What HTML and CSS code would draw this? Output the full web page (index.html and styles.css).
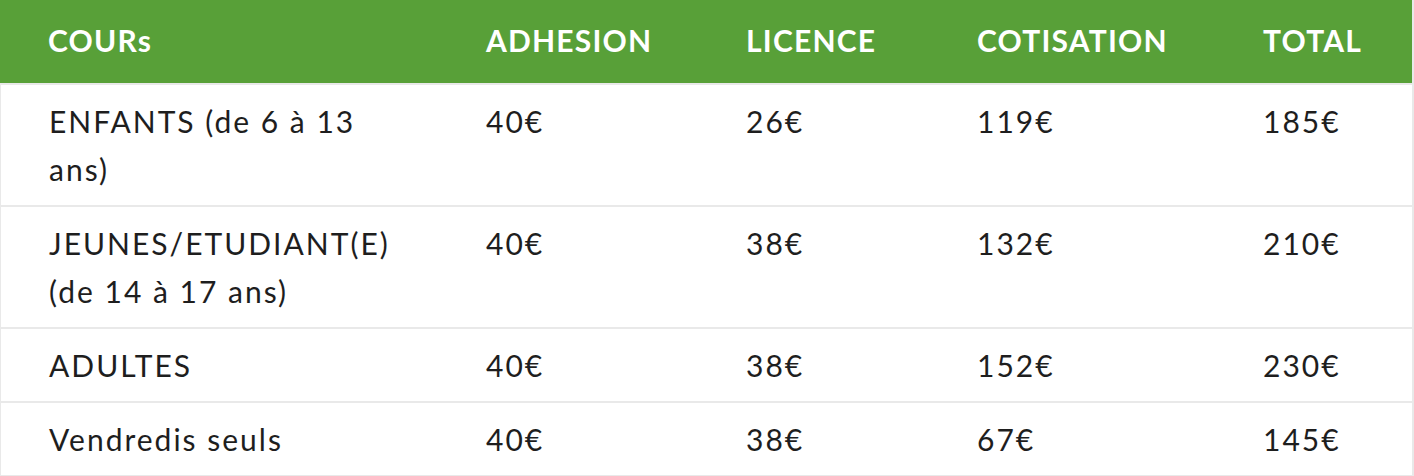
FILE: index.html
```html
<!DOCTYPE html>
<html lang="fr">
<head>
<meta charset="utf-8">
<title>Tarifs</title>
<link rel="stylesheet" href="styles.css">
</head>
<body>
<table class="tarifs">
  <colgroup>
    <col class="c1"><col class="c2"><col class="c3"><col class="c4"><col class="c5">
  </colgroup>
  <thead>
    <tr>
      <th>COURs</th>
      <th>ADHESION</th>
      <th>LICENCE</th>
      <th>COTISATION</th>
      <th>TOTAL</th>
    </tr>
  </thead>
  <tbody>
    <tr>
      <td>ENFANTS (de 6 à 13 ans)</td>
      <td>40€</td>
      <td>26€</td>
      <td>119€</td>
      <td>185€</td>
    </tr>
    <tr>
      <td>JEUNES/ETUDIANT(E) (de 14 à 17 ans)</td>
      <td>40€</td>
      <td>38€</td>
      <td>132€</td>
      <td>210€</td>
    </tr>
    <tr>
      <td>ADULTES</td>
      <td>40€</td>
      <td>38€</td>
      <td>152€</td>
      <td>230€</td>
    </tr>
    <tr>
      <td>Vendredis seuls</td>
      <td>40€</td>
      <td>38€</td>
      <td>67€</td>
      <td>145€</td>
    </tr>
  </tbody>
</table>
</body>
</html>
```
FILE: styles.css
```css
html, body {
  margin: 0;
  padding: 0;
  background: #ffffff;
}

.tarifs {
  width: 1414px;
  table-layout: fixed;
  border-collapse: separate;
  border-spacing: 0;
  border-right: 2px solid #e9e9e9;
  font-family: Lato, "Open Sans", sans-serif;
  font-size: 30px;
  line-height: 48px;
  color: #1e1e1e;
}

.c1 { width: 438px; }
.c2 { width: 260px; }
.c3 { width: 231px; }
.c4 { width: 286px; }
.c5 { width: 197px; }

.tarifs th {
  background: #58a038;
  color: #ffffff;
  font-weight: 700;
  letter-spacing: 1.2px;
  text-align: left;
  padding: 16px 20px 19px 48px;
  border-bottom: 2px solid #e9e9e9;
}

.tarifs td {
  text-align: left;
  vertical-align: top;
  letter-spacing: 2px;
  padding: 12px 20px 12px 48px;
  border-bottom: 2px solid #e9e9e9;
}

.tarifs td:first-child {
  border-left: 1px solid #e9e9e9;
  padding-right: 36px;
}
```
